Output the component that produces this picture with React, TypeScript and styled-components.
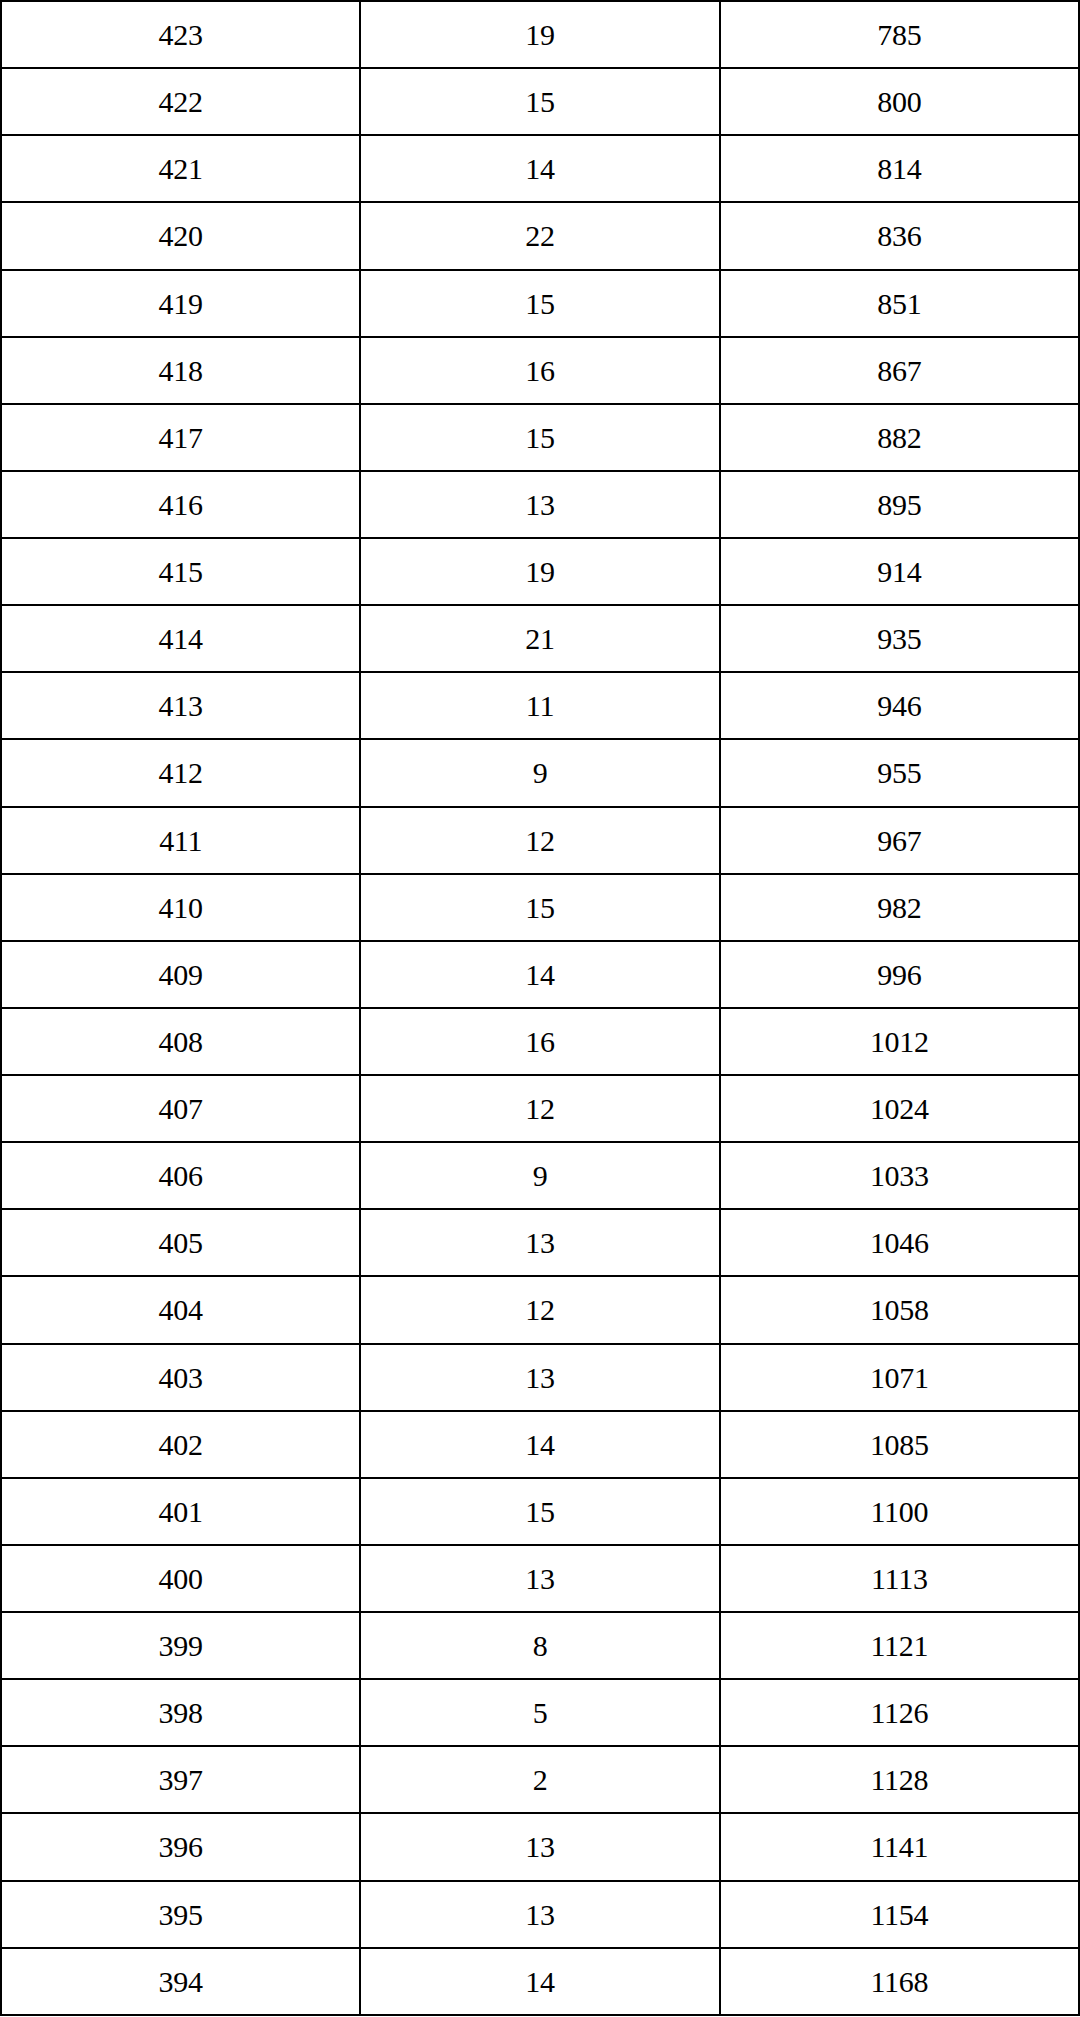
import React from "react";
import styled, { createGlobalStyle } from "styled-components";

const Global = createGlobalStyle`
  html, body { margin: 0; padding: 0; background: #fff; }
  body { font-family: "Liberation Serif", "Times New Roman", serif; }
`;

const Table = styled.div`
  width: 1080px;
  box-sizing: border-box;
  display: grid;
  grid-template-columns: repeat(3, 1fr);
  grid-auto-rows: 67.133px;
  border-top: 2px solid #000;
  border-left: 2px solid #000;
`;

const Cell = styled.div`
  box-sizing: border-box;
  display: flex;
  align-items: center;
  justify-content: center;
  border-right: 2px solid #000;
  border-bottom: 2px solid #000;
  font-family: "Liberation Serif", "Times New Roman", serif;
  font-size: 30px;
  letter-spacing: -0.3px;
  color: #000;
  padding-top: 1px;
`;

const rows: [number, number, number][] = [
  [423, 19, 785],
  [422, 15, 800],
  [421, 14, 814],
  [420, 22, 836],
  [419, 15, 851],
  [418, 16, 867],
  [417, 15, 882],
  [416, 13, 895],
  [415, 19, 914],
  [414, 21, 935],
  [413, 11, 946],
  [412, 9, 955],
  [411, 12, 967],
  [410, 15, 982],
  [409, 14, 996],
  [408, 16, 1012],
  [407, 12, 1024],
  [406, 9, 1033],
  [405, 13, 1046],
  [404, 12, 1058],
  [403, 13, 1071],
  [402, 14, 1085],
  [401, 15, 1100],
  [400, 13, 1113],
  [399, 8, 1121],
  [398, 5, 1126],
  [397, 2, 1128],
  [396, 13, 1141],
  [395, 13, 1154],
  [394, 14, 1168],
];

export default function App() {
  return (
    <>
      <Global />
      <Table>
        {rows.map((r) =>
          r.map((v, i) => <Cell key={`${r[0]}-${i}`}>{v}</Cell>)
        )}
      </Table>
    </>
  );
}
